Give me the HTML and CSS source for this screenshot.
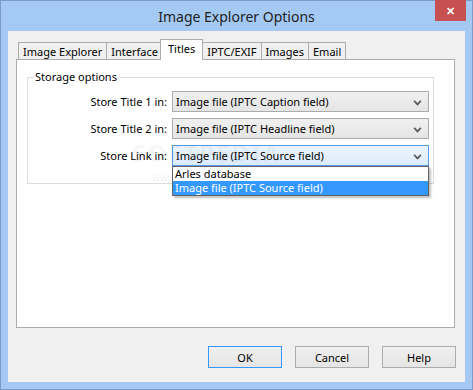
FILE: index.html
```html
<!DOCTYPE html>
<html lang="en">
<head>
    <meta charset="UTF-8">
    <title>Image Explorer Options</title>
    <link rel="stylesheet" href="styles.css">
</head>
<body>

<div class="window">
    <div class="titlebar">
        <span class="title">Image Explorer Options</span>
        <span class="close">&#x2715;</span>
    </div>

    <div class="client">
        <!-- Tabs -->
        <div class="tabs">
            <div class="tab">Image Explorer</div>
            <div class="tab">Interface</div>
            <div class="tab active">Titles</div>
            <div class="tab">IPTC/EXIF</div>
            <div class="tab">Images</div>
            <div class="tab">Email</div>
        </div>

        <div class="panel">
            <fieldset class="group">
                <legend>Storage options</legend>
                <div class="row">
                    <label>Store Title 1 in:</label>
                    <div class="combo">Image file (IPTC Caption field)<span class="arrow"></span></div>
                </div>
                <div class="row">
                    <label>Store Title 2 in:</label>
                    <div class="combo">Image file (IPTC Headline field)<span class="arrow"></span></div>
                </div>
                <div class="row">
                    <label>Store Link in:</label>
                    <div class="combo-wrap">
                        <div class="combo open">Image file (IPTC Source field)<span class="arrow"></span></div>
                        <ul class="dropdown">
                            <li>Arles database</li>
                            <li class="selected">Image file (IPTC Source field)</li>
                        </ul>
                    </div>
                </div>
            </fieldset>
            <div class="watermark">SOFTPEDIA<sup>&trade;</sup><small>www.softpedia.com</small></div>
        </div>

        <!-- Dialog buttons -->
        <div class="buttons">
            <button class="btn default">OK</button>
            <button class="btn">Cancel</button>
            <button class="btn">Help</button>
        </div>
    </div>
</div>

</body>
</html>
```

FILE: styles.css
```css
body { margin: 0; font-family: "Noto Sans", "Open Sans", sans-serif; font-size: 11px; color: #000; }
.window { position: relative; width: 473px; height: 390px; box-sizing: border-box; border: 1px solid #7a9cc6; background-color: #a4caf3; display: flex; flex-direction: column; }
.titlebar { height: 30px; display: flex; align-items: center; justify-content: center; }
.title { font-size: 14px; color: #1e1e1e; margin-top: 1px; }
.close { position: absolute; top: -1px; right: 6px; width: 31px; height: 21px; background-color: #c75050; color: #fff; font-size: 11px; font-weight: bold; display: flex; align-items: center; justify-content: center; }
.client { margin: 0 7px 7px 7px; flex: 1; background-color: #f0f0f0; padding: 8px 10px 0 8px; display: flex; flex-direction: column; }

.tabs { display: flex; align-items: flex-end; height: 21px; padding-left: 2px; }
.tab { height: 17px; line-height: 17px; padding: 0 4px; border: 1px solid #acacac; border-bottom: none; margin-right: -1px; background-color: #f0f0f0; }
.tab.active { height: 20px; line-height: 18px; background-color: #fff; position: relative; z-index: 1; margin: 0 -1px 0 -2px; padding: 0 7px; }

.panel { position: relative; height: 269px; box-sizing: border-box; border: 1px solid #acacac; background-color: #fff; margin-top: -1px; padding: 10px 20px 0 10px; }
.group { margin: 0; border: 1px solid #dcdcdc; padding: 7px 4px 15px 0; height: 114px; box-sizing: border-box; }
.group legend { padding: 0 1px; margin-left: 6px; line-height: 14px; }
.row { display: flex; align-items: center; margin-bottom: 6px; }
.row label { width: 139px; text-align: right; padding-right: 5px; }
.combo-wrap { position: relative; flex: 1; }
.combo { flex: 1; position: relative; height: 21px; line-height: 19px; box-sizing: border-box; border: 1px solid #acacac; background: linear-gradient(#f0f0f0, #e5e5e5); padding-left: 3px; }
.combo.open { border-color: #569de5; background: linear-gradient(#ecf4fc, #dcecfc); }
.arrow { position: absolute; right: 7px; top: 6px; width: 5px; height: 5px; border-right: 2px solid #555; border-bottom: 2px solid #555; transform: rotate(45deg) scale(0.8); }

.dropdown { position: absolute; top: 21px; left: 0; right: 0; margin: 0; padding: 0; list-style: none; background-color: #fff; border: 1px solid #646464; box-shadow: 2px 2px 2px rgba(0, 0, 0, 0.25); z-index: 2; }
.dropdown li { height: 14px; line-height: 13px; padding-left: 2px; }
.dropdown li.selected { background-color: #3399ff; color: #fff; }

.watermark { position: absolute; left: 115px; top: 78px; font-size: 24px; font-weight: bold; letter-spacing: 2px; color: rgba(0, 0, 0, 0.05); line-height: 24px; }
.watermark sup { font-size: 8px; }
.watermark small { display: block; font-size: 10px; font-weight: normal; letter-spacing: 0; margin-left: 20px; color: rgba(0, 0, 0, 0.08); }

.buttons { display: flex; justify-content: flex-end; gap: 13px; margin-top: 18px; margin-right: -1px; }
.btn { width: 74px; height: 22px; padding: 0; font-family: inherit; font-size: 11px; color: #000; border: 1px solid #acacac; background: linear-gradient(#f0f0f0, #e5e5e5); }
.btn.default { border-color: #3399ff; }
```
